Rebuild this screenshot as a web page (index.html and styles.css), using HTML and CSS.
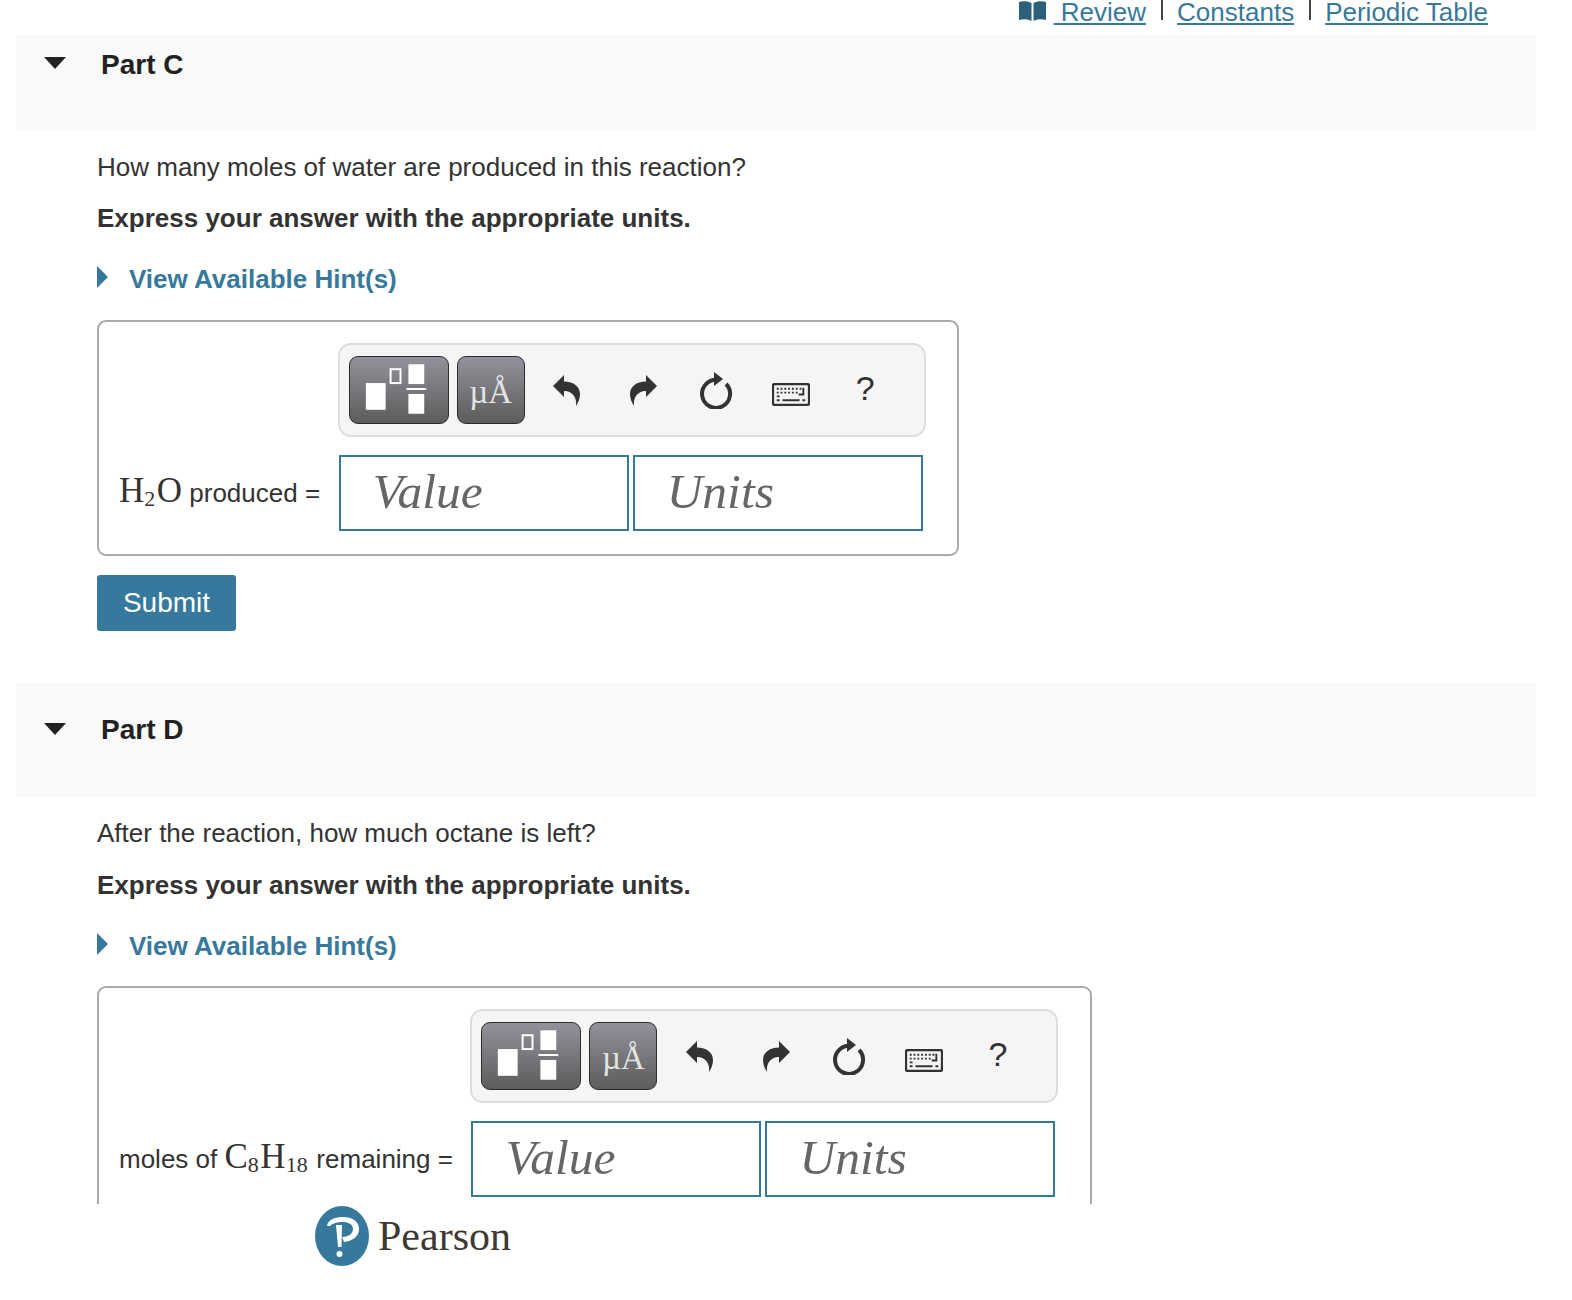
FILE: index.html
```html
<!DOCTYPE html>
<html lang="en">
<head>
  <meta charset="UTF-8" />
  <meta name="viewport" content="width=device-width, initial-scale=1.0"/>
  <title>Part C and Part D</title>
  <link rel="stylesheet" href="styles.css">
</head>
<body>
  <svg class="defs" width="0" height="0">
    <symbol id="icon-undo" viewBox="0 0 28 32">
      <path d="M1 12 L12 1 V7.5 C22 7.5 28 13 28 20 C28 25 26 29 24 32 C25 24 21 17 12 17 V23 Z"/>
    </symbol>
    <symbol id="icon-reload" viewBox="0 0 34 38">
      <path d="M19 9 A14 14 0 1 0 27 13" fill="none" stroke="#333" stroke-width="4"/>
      <path d="M15 1 L24 8 L15 15 Z"/>
    </symbol>
    <symbol id="icon-keyboard" viewBox="0 0 40 24">
      <rect x="1" y="1" width="38" height="22" rx="2" fill="none" stroke="#333" stroke-width="2.5"/>
      <path d="M5 6 H31" stroke="#333" stroke-width="2" stroke-dasharray="2 2"/>
      <path d="M5 10 H27" stroke="#333" stroke-width="2" stroke-dasharray="2 2"/>
      <path d="M33 5 V12 H28" fill="none" stroke="#333" stroke-width="2"/>
      <path d="M5 14 H8 M11 18 H29 M5 18 H8 M32 18 H35" stroke="#333" stroke-width="2"/>
    </symbol>
    <symbol id="icon-template" viewBox="0 0 99 68">
      <rect x="16" y="27" width="20" height="27" fill="#fff"/>
      <rect x="41" y="13" width="10" height="14" fill="none" stroke="#fff" stroke-width="2"/>
      <rect x="59" y="8" width="16" height="20" fill="#fff"/>
      <rect x="57" y="32" width="20" height="2" fill="#fff"/>
      <rect x="59" y="38" width="16" height="20" fill="#fff"/>
    </symbol>
  </svg>

  <div class="scroller">
    <nav class="toplinks">
      <svg class="book" viewBox="0 0 27 20" width="27" height="20">
        <path d="M0 1 C4 0 9 0 12.5 2 V20 C9 18 4 18 0 19 Z M14.5 2 C18 0 23 0 27 1 V19 C23 18 18 18 14.5 20 Z"/>
      </svg>
      <a href="#">&nbsp;Review</a>
      <span class="sep"></span>
      <a href="#">Constants</a>
      <span class="sep"></span>
      <a href="#">Periodic Table</a>
    </nav>

    <section class="part part-c">
      <header class="part-head">
        <span class="caret-down"></span>
        <h2>Part C</h2>
      </header>
      <div class="part-body">
        <p class="question">How many moles of water are produced in this reaction?</p>
        <p class="instruction">Express your answer with the appropriate units.</p>
        <a class="hints" href="#"><span class="caret-right"></span>View Available Hint(s)</a>

        <div class="answer-box">
          <div class="toolbar">
            <button class="tool-btn tool-template" type="button"><svg width="99" height="68"><use href="#icon-template"/></svg></button>
            <button class="tool-btn tool-units" type="button">µÅ</button>
            <span class="tool-icon"><svg width="28" height="32"><use href="#icon-undo"/></svg></span>
            <span class="tool-icon"><svg class="flip" width="28" height="32"><use href="#icon-undo"/></svg></span>
            <span class="tool-icon"><svg width="34" height="38"><use href="#icon-reload"/></svg></span>
            <span class="tool-icon tool-keys"><svg width="38" height="23"><use href="#icon-keyboard"/></svg></span>
            <span class="tool-icon tool-help">?</span>
          </div>
          <div class="answer-row">
            <label class="answer-label"><span class="chem">H<sub>2</sub>O</span> produced =</label>
            <input class="answer-input" type="text" placeholder="Value">
            <input class="answer-input" type="text" placeholder="Units">
          </div>
        </div>

        <button class="submit" type="button">Submit</button>
      </div>
    </section>

    <section class="part part-d">
      <header class="part-head">
        <span class="caret-down"></span>
        <h2>Part D</h2>
      </header>
      <div class="part-body">
        <p class="question">After the reaction, how much octane is left?</p>
        <p class="instruction">Express your answer with the appropriate units.</p>
        <a class="hints" href="#"><span class="caret-right"></span>View Available Hint(s)</a>

        <div class="answer-box">
          <div class="toolbar">
            <button class="tool-btn tool-template" type="button"><svg width="99" height="68"><use href="#icon-template"/></svg></button>
            <button class="tool-btn tool-units" type="button">µÅ</button>
            <span class="tool-icon"><svg width="28" height="32"><use href="#icon-undo"/></svg></span>
            <span class="tool-icon"><svg class="flip" width="28" height="32"><use href="#icon-undo"/></svg></span>
            <span class="tool-icon"><svg width="34" height="38"><use href="#icon-reload"/></svg></span>
            <span class="tool-icon tool-keys"><svg width="38" height="23"><use href="#icon-keyboard"/></svg></span>
            <span class="tool-icon tool-help">?</span>
          </div>
          <div class="answer-row">
            <label class="answer-label">moles of <span class="chem">C<sub>8</sub>H<sub>18</sub></span> remaining =</label>
            <input class="answer-input" type="text" placeholder="Value">
            <input class="answer-input" type="text" placeholder="Units">
          </div>
        </div>
      </div>
    </section>
  </div>

  <footer class="footer">
    <svg class="pearson-mark" viewBox="0 0 54 60" width="54" height="60">
      <ellipse cx="27" cy="30" rx="27" ry="30" fill="#37799c"/>
      <path d="M12 20 C13 13 21 11 28 11 C37 11 44 15 44 23 C44 31 37 35 29 36 L27 31 C33 31 38 28 38 23 C38 18 33 16 28 16 C22 16 18 17 15 20 Z" fill="#fff"/>
      <path d="M21 19 H27 L26.5 41 H23 Z" fill="#fff"/>
      <circle cx="24.5" cy="48" r="3" fill="#fff"/>
    </svg>
    <span class="pearson-name">Pearson</span>
  </footer>
</body>
</html>
```
FILE: styles.css
```css
* {
  margin: 0;
  padding: 0;
  box-sizing: border-box;
}

body {
  background: #fff;
  color: #333;
  font-family: "Liberation Sans", Arial, sans-serif;
  font-size: 26px;
  overflow: hidden;
}

.defs {
  display: block;
  height: 0;
}

a {
  color: #37799c;
}

.scroller {
  height: 1204px;
  overflow: hidden;
  padding: 0 36px 0 16px;
}

.toplinks {
  height: 35px;
  padding-right: 48px;
  display: flex;
  justify-content: flex-end;
  align-items: flex-start;
  line-height: 24px;
}

.toplinks .book {
  fill: #2a6079;
  margin: 1px 8px 0 0;
}

.sep {
  width: 2px;
  height: 20px;
  margin: 0 14.5px;
  background: #444;
}

.part-head {
  display: flex;
  background: #f9f9f9;
  padding-left: 28px;
}

.part-c .part-head {
  height: 95px;
}

.part-d .part-head {
  height: 114px;
}

.part-d {
  margin-top: 52px;
}

.caret-down {
  width: 0;
  height: 0;
  margin-top: 22px;
  border-left: 11px solid transparent;
  border-right: 11px solid transparent;
  border-top: 12px solid #222;
}

.part-head h2 {
  margin: 14px 0 0 35px;
  font-size: 28px;
  line-height: 32px;
  color: #222;
}

.part-d .part-head h2 {
  margin-top: 31px;
}

.part-d .caret-down {
  margin-top: 40px;
}

.part-body {
  padding-left: 81px;
}

.question {
  margin-top: 21px;
  line-height: 32px;
}

.instruction {
  margin-top: 19px;
  font-weight: bold;
  line-height: 32px;
}

.part-d .question {
  margin-top: 20px;
}

.part-d .instruction {
  margin-top: 20px;
}

.hints {
  display: flex;
  margin-top: 29px;
  font-weight: bold;
  line-height: 32px;
  text-decoration: none;
}

.caret-right {
  width: 0;
  height: 0;
  margin: 3px 21px 0 0;
  border-top: 11px solid transparent;
  border-bottom: 11px solid transparent;
  border-left: 11px solid #37799c;
}

.answer-box {
  width: fit-content;
  margin-top: 25px;
  padding: 21px 34.5px 23px 20px;
  border: 2px solid #aaa;
  border-radius: 9px;
}

.part-d .answer-box {
  margin-top: 24px;
}

.toolbar {
  display: flex;
  align-items: center;
  width: 588px;
  height: 94px;
  margin: 0 -3px 18px auto;
  padding-left: 9px;
  background: #f5f5f5;
  border: 2px solid #ddd;
  border-radius: 13px;
}

.tool-btn {
  height: 68px;
  margin-top: -1px;
  border: 1px solid #2b2b2b;
  border-radius: 9px;
  background: linear-gradient(#93929b, #5c5c5c);
  display: flex;
  align-items: center;
  justify-content: center;
}

.tool-template {
  width: 100px;
  margin-right: 8px;
}

.tool-units {
  width: 68px;
  margin-right: 4px;
  padding-top: 6px;
  color: #e4e4e4;
  font-family: "Liberation Serif", serif;
  font-size: 33px;
}

.tool-icon {
  width: 75px;
  fill: #333;
  display: flex;
  justify-content: center;
  align-items: center;
}

.flip {
  margin-left: 6px;
  transform: scaleX(-1);
}

.tool-keys {
  padding-top: 8px;
}

.tool-help {
  padding: 0 2px 4px 0;
  font-size: 34px;
  line-height: 38px;
}

.answer-row {
  display: flex;
  align-items: center;
}

.answer-label {
  margin: -2px 18.5px 0 0;
  white-space: nowrap;
}

.chem {
  font-family: "Liberation Serif", serif;
  font-size: 35px;
  line-height: 32px;
}

.chem sub {
  margin-right: 1.5px;
  font-size: 22px;
  line-height: 0;
  vertical-align: -4px;
}

.answer-input {
  width: 290px;
  height: 76px;
  margin-right: 4px;
  padding: 0 0 3px 32px;
  border: 2px solid #37799c;
  border-radius: 0;
  background: #fff;
  font-family: "Liberation Serif", serif;
  font-style: italic;
  font-size: 49.5px;
}

.answer-input:last-child {
  margin-right: 0;
}

.answer-input::placeholder {
  color: #666;
  opacity: 1;
}

.submit {
  display: block;
  width: 139px;
  height: 56px;
  margin-top: 19px;
  border: none;
  border-radius: 3px;
  background: #37799c;
  color: #fff;
  font-family: inherit;
  font-size: 28px;
}

.footer {
  display: flex;
  align-items: center;
  height: 96px;
  padding: 0 0 32px 315px;
}

.pearson-name {
  margin-left: 9px;
  color: #3d3935;
  font-family: "Liberation Serif", serif;
  font-size: 42px;
}
```
